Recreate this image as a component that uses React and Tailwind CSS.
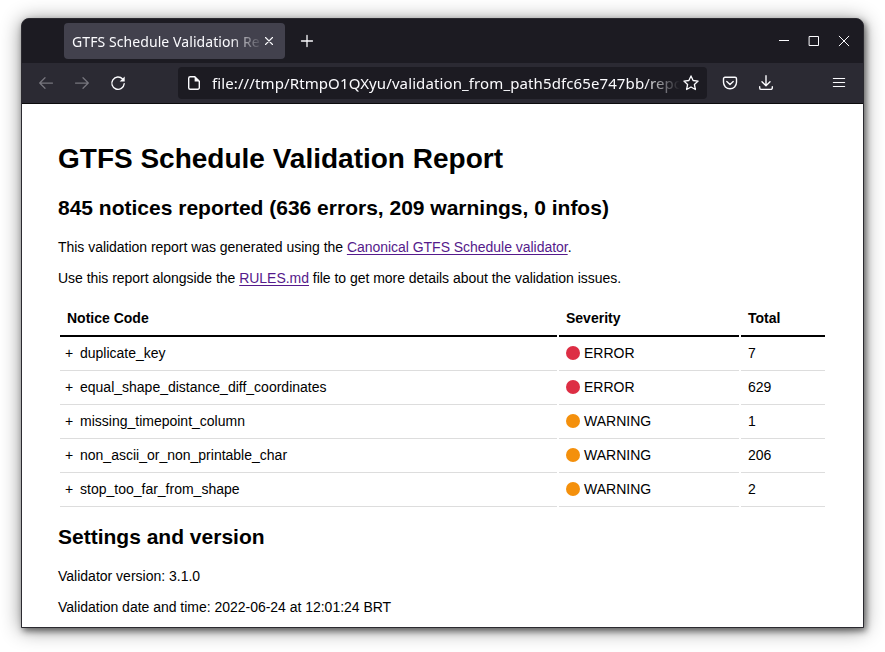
const notices = [
  { code: 'duplicate_key', severity: 'ERROR', total: 7 },
  { code: 'equal_shape_distance_diff_coordinates', severity: 'ERROR', total: 629 },
  { code: 'missing_timepoint_column', severity: 'WARNING', total: 1 },
  { code: 'non_ascii_or_non_printable_char', severity: 'WARNING', total: 206 },
  { code: 'stop_too_far_from_shape', severity: 'WARNING', total: 2 },
];

function Icon({ children, className = '', size = 16, width = 1.25 }) {
  return (
    <svg
      className={`shrink-0 ${className}`}
      width={size}
      height={size}
      viewBox={`0 0 ${size} ${size}`}
      fill="none"
      stroke="currentColor"
      strokeWidth={width}
      strokeLinecap="round"
      strokeLinejoin="round"
    >
      {children}
    </svg>
  );
}

function TabBar() {
  return (
    <div className="flex h-11 items-center bg-[#1c1b22] pl-[42px] pr-[11px] text-[#fbfbfe]">
      <div className="flex h-9 w-[221px] items-center rounded-[4px] bg-[#42414d] pl-2">
        <div className="w-[189px] overflow-hidden whitespace-nowrap pt-0.5 text-[14px] leading-5 tracking-[0.08px] [mask-image:linear-gradient(to_right,black_158px,transparent_191px)]">
          GTFS Schedule Validation Rep
        </div>
        <Icon width={1.1}>
          <path d="M4.5 4.5l7 7M11.5 4.5l-7 7" />
        </Icon>
      </div>
      <Icon className="ml-[14px]" width={1.3}>
        <path d="M8 2.5v11M2.5 8h11" />
      </Icon>
      <div className="ml-auto flex gap-[14px]">
        <Icon width={1}>
          <path d="M3 7.5h10" strokeLinecap="butt" />
        </Icon>
        <Icon width={1}>
          <path d="M3.5 3.5h9v9h-9z" strokeLinejoin="miter" />
        </Icon>
        <Icon width={1}>
          <path d="M3.2 3.2l9.6 9.6M12.8 3.2l-9.6 9.6" />
        </Icon>
      </div>
    </div>
  );
}

function NavBar() {
  return (
    <div className="flex h-[41px] items-center border-b border-[#0c0c0d] bg-[#2b2a33] text-[#fbfbfe]">
      <Icon className="ml-4 text-[#77767e]">
        <path d="M14.5 8H1.8M7 2.7L1.7 8 7 13.3" />
      </Icon>
      <Icon className="ml-5 text-[#77767e]">
        <path d="M1.5 8h12.7M9 2.7L14.3 8 9 13.3" />
      </Icon>
      <Icon className="ml-5" width={1.4}>
        <path d="M12.6 4A6.2 6.2 0 1 0 14.2 8.8" />
        <path d="M14.7 1.5v5H9.7z" fill="currentColor" stroke="none" />
      </Icon>
      <div className="ml-[52px] flex h-8 w-[529px] items-center rounded-[4px] bg-[#1c1b22] px-2">
        <Icon width={1.4}>
          <path d="M4.2 1.7h4.6l4.5 4.5v6.6a1.5 1.5 0 0 1-1.5 1.5H4.2a1.5 1.5 0 0 1-1.5-1.5V3.2a1.5 1.5 0 0 1 1.5-1.5z" />
          <path d="M8.6 1.5v5h5z" fill="currentColor" stroke="none" />
        </Icon>
        <div className="ml-[10px] w-[471px] overflow-hidden whitespace-nowrap text-[15px] leading-6 tracking-[0.11px] [mask-image:linear-gradient(to_right,black_432px,transparent_468px)]">
          file:///tmp/RtmpO1QXyu/validation_from_path5dfc65e747bb/repo
        </div>
        <Icon width={1.3}>
          <path d="M8 .9l2.1 4.6 5 .6-3.7 3.4 1 5L8 12l-4.4 2.5 1-5L.9 6.1l5-.6z" />
        </Icon>
      </div>
      <Icon className="ml-[15px]" width={1.4}>
        <path d="M3 2.2h10a1.5 1.5 0 0 1 1.5 1.5v3.6a6.5 6.5 0 0 1-13 0V3.7A1.5 1.5 0 0 1 3 2.2z" />
        <path d="M4.8 6.4L8 9.5l3.2-3.1" />
      </Icon>
      <Icon className="ml-5" width={1.4}>
        <path d="M8 .8v9.7M4 6.7l4 4 4-4M1.7 11.8v1.1a1.5 1.5 0 0 0 1.5 1.5h9.6a1.5 1.5 0 0 0 1.5-1.5v-1.1" />
      </Icon>
      <Icon className="ml-auto mr-4" width={1.2}>
        <path d="M2.4 3.5h11.2M2.4 7.5h11.2M2.4 11.5h11.2" />
      </Icon>
    </div>
  );
}

function Link({ children }) {
  return (
    <a
      className="text-[#551a8b] underline decoration-1 underline-offset-2 [text-decoration-skip-ink:none]"
      href="#"
    >
      {children}
    </a>
  );
}

function NoticeTable() {
  return (
    <div className="ml-0.5 mt-[15px] text-[14px]">
      <div className="flex h-[35px] gap-0.5 font-bold leading-8">
        <div className="w-[497px] border-b-2 border-black pl-[7px]">Notice Code</div>
        <div className="w-[180px] border-b-2 border-black pl-[7px]">Severity</div>
        <div className="w-[84px] border-b-2 border-black pl-[7px]">Total</div>
      </div>
      {notices.map((n) => (
        <div key={n.code} className="flex h-[34px] gap-0.5 leading-8">
          <div className="flex w-[497px] border-b border-[#dddddd] pl-[5px]">
            <span className="w-[15px]">+</span>
            {n.code}
          </div>
          <div className="flex w-[180px] items-center border-b border-[#dddddd] pb-px pl-[7px]">
            <span
              className={`mr-1 size-3.5 rounded-full ${n.severity === 'ERROR' ? 'bg-[#dd2e44]' : 'bg-[#f4900c]'}`}
            />
            {n.severity}
          </div>
          <div className="w-[84px] border-b border-[#dddddd] pl-[7px]">{n.total}</div>
        </div>
      ))}
    </div>
  );
}

function Report() {
  return (
    <main className="flex-1 bg-white pl-9 pt-[37px] font-['Liberation_Sans',Arial,sans-serif] text-[14px] leading-[18px] text-black">
      <h1 className="text-[28px] font-bold leading-9">GTFS Schedule Validation Report</h1>
      <h2 className="mt-[17px] text-[21px] font-bold leading-7">
        845 notices reported (636 errors, 209 warnings, 0 infos)
      </h2>
      <p className="mt-4 tracking-[-0.03px]">
        This validation report was generated using the <Link>Canonical GTFS Schedule validator</Link>.
      </p>
      <p className="mt-[13px] tracking-[-0.03px]">
        Use this report alongside the <Link>RULES.md</Link> file to get more details about the validation issues.
      </p>
      <NoticeTable />
      <h2 className="mt-4 text-[21px] font-bold leading-7">Settings and version</h2>
      <p className="mt-4">Validator version: 3.1.0</p>
      <p className="mt-[13px] tracking-[-0.02px]">Validation date and time: 2022-06-24 at 12:01:24 BRT</p>
    </main>
  );
}

export default function App() {
  return (
    <div className="h-[652px] w-[885px] overflow-hidden bg-white pl-[21px] pt-[18px] font-['Noto_Sans','Open_Sans',sans-serif]">
      <div className="flex h-[610px] w-[843px] flex-col overflow-hidden rounded-t-[8px] border border-[#2b2a30] bg-[#1c1b22] shadow-[2px_3px_6px_rgba(0,0,0,0.5),0_2px_20px_rgba(0,0,0,0.45)]">
        <TabBar />
        <NavBar />
        <Report />
      </div>
    </div>
  );
}
